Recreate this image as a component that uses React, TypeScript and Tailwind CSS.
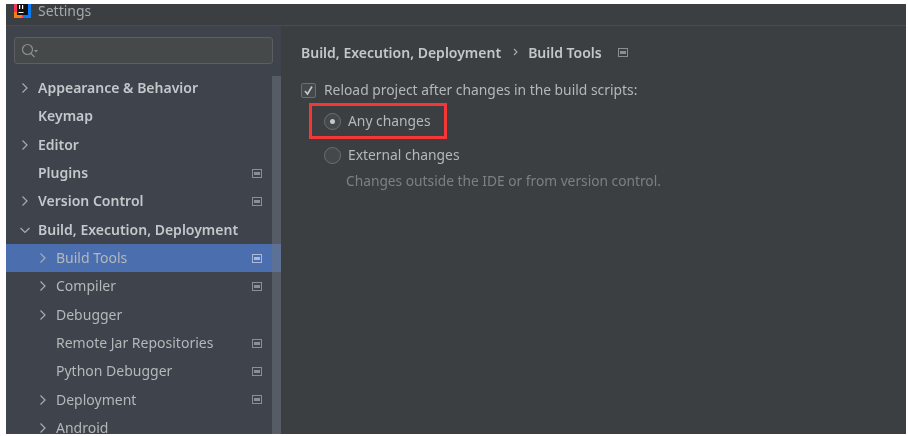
import React from "react";

const Chevron = ({ open = false }: { open?: boolean }) => (
  <svg width="10" height="10" viewBox="0 0 10 10" fill="none" stroke="#a9adb0" strokeWidth="1.2" className="shrink-0">
    {open ? <path d="M0.5 3l4.5 4.5L9.5 3" /> : <path d="M2.5 0.5L7 5l-4.5 4.5" />}
  </svg>
);

const Pin = ({ color = "#8b8f92" }: { color?: string }) => (
  <svg width="10" height="9" viewBox="0 0 10 9" className="shrink-0">
    <rect x="0.5" y="0.5" width="9" height="8" fill="none" stroke={color} />
    <rect x="2" y="3" width="6" height="3" fill={color} />
  </svg>
);

type Row = { label: string; level: 0 | 1; arrow?: "open" | "closed"; pin?: boolean; bold?: boolean; selected?: boolean };

const rows: Row[] = [
  { label: "Appearance & Behavior", level: 0, arrow: "closed", bold: true },
  { label: "Keymap", level: 0, bold: true },
  { label: "Editor", level: 0, arrow: "closed", bold: true },
  { label: "Plugins", level: 0, bold: true, pin: true },
  { label: "Version Control", level: 0, arrow: "closed", bold: true, pin: true },
  { label: "Build, Execution, Deployment", level: 0, arrow: "open", bold: true },
  { label: "Build Tools", level: 1, arrow: "closed", pin: true, selected: true },
  { label: "Compiler", level: 1, arrow: "closed", pin: true },
  { label: "Debugger", level: 1, arrow: "closed" },
  { label: "Remote Jar Repositories", level: 1, pin: true },
  { label: "Python Debugger", level: 1, pin: true },
  { label: "Deployment", level: 1, arrow: "closed", pin: true },
  { label: "Android", level: 1, arrow: "closed" },
];

function TreeRow({ r }: { r: Row }) {
  return (
    <div className={`h-[28.33px] shrink-0 flex items-center pr-[19px] ${r.selected ? "bg-[#4b6eaf]" : ""} ${r.level === 0 ? "pl-[14px]" : "pl-[32px]"}`}>
      <span className="w-[18px] flex items-center shrink-0">
        {r.arrow && <Chevron open={r.arrow === "open"} />}
      </span>
      <span className={`flex-1 text-[14px] leading-none whitespace-nowrap ${r.bold ? "font-semibold text-[#c4c8cb]" : "text-[#b4b8ba]"}`}>{r.label}</span>
      {r.pin && <Pin color={r.selected ? "#a9b9d6" : "#8b8f92"} />}
    </div>
  );
}

export default function App() {
  return (
    <div className="w-[908px] h-[436px] bg-white pt-[4px] pl-[6px] pr-[2px] pb-[2px] overflow-hidden font-['Noto_Sans',sans-serif] blur-[0.4px]">
      <div className="h-full flex flex-col bg-[#3c3f41]">
        <div className="h-[22px] shrink-0 flex items-start border-b border-[#4a4d4f] pl-[8px] gap-[7px] overflow-hidden">
          <svg width="17" height="17" viewBox="0 0 17 17" className="shrink-0 -mt-[3px]">
            <rect x="0" y="0" width="17" height="17" fill="#fe315d" />
            <rect x="9" y="0" width="8" height="17" fill="#087cfa" />
            <rect x="0" y="11" width="8" height="6" fill="#f97a12" />
            <rect x="3" y="2" width="11" height="12" fill="#111" />
            <rect x="4.5" y="11" width="5" height="1" fill="#fff" />
            <rect x="5" y="4" width="1.2" height="4" fill="#fff" />
            <rect x="8" y="4" width="1.2" height="4" fill="#fff" />
          </svg>
          <span className="text-[14px] leading-none text-[#a5a9ab]">Settings</span>
        </div>
        <div className="flex-1 flex min-h-0">
          <div className="w-[275px] shrink-0 bg-[#3e434c] flex flex-col relative overflow-hidden">
            <div className="mt-[11px] ml-[8px] mr-[8px] h-[27px] shrink-0 bg-[#45494a] border border-[#5b5f60] rounded-[3px] flex items-center pl-[6px]">
              <svg width="18" height="16" viewBox="0 0 18 16" fill="none" stroke="#8c9092" strokeWidth="1.2">
                <circle cx="6.5" cy="6.5" r="5" />
                <path d="M10 10.5l3.5 3.5" />
                <path d="M13 7h4l-2 2.5z" fill="#8c9092" stroke="none" />
              </svg>
            </div>
            <div className="mt-[10px] flex flex-col">
              {rows.map((r) => (
                <TreeRow key={r.label} r={r} />
              ))}
            </div>
            <div className="absolute right-0 top-[50px] bottom-0 w-[9px] bg-[#70747d]/50" />
          </div>
          <div className="flex-1 pl-[20px] pt-[14px] text-[13.85px] text-[#b4b8ba]">
            <div className="flex items-center h-[24px] text-[#c4c8cb] font-semibold text-[14px]">
              <span>Build, Execution, Deployment</span>
              <svg width="8" height="10" viewBox="0 0 8 10" fill="none" stroke="#a9adb0" strokeWidth="1.1" className="ml-[11px] mr-[8px]">
                <path d="M2 2l3 3-3 3" />
              </svg>
              <span>Build Tools</span>
              <span className="ml-[16px] flex"><Pin /></span>
            </div>
            <div className="flex items-center h-[24px] mt-[14px]">
              <span className="w-[15px] h-[15px] rounded-[2px] border border-[#6b6f71] bg-[#43494a] flex items-center justify-center mr-[8px] shrink-0">
                <svg width="11" height="11" viewBox="0 0 11 11" fill="none" stroke="#c4c8cb" strokeWidth="1.6"><path d="M2 6l2.5 3L9 1.5" /></svg>
              </span>
              <span>Reload project after changes in the build scripts:</span>
            </div>
            <div className="ml-[8px] mt-[1px] w-[138px] h-[36px] border-[3.5px] border-[#f63737] flex items-center pl-[12px] gap-[7px]">
              <span className="w-[17px] h-[17px] rounded-full border border-[#6b6f71] bg-[#43494a] flex items-center justify-center shrink-0">
                <span className="w-[5px] h-[5px] rounded-full bg-[#c4c8cb]" />
              </span>
              <span>Any changes</span>
            </div>
            <div className="ml-[8px] h-[32px] flex items-center pl-[15px] gap-[7px]">
              <span className="w-[17px] h-[17px] rounded-full border border-[#6b6f71] bg-[#43494a] shrink-0" />
              <span>External changes</span>
            </div>
            <div className="ml-[45px] text-[13.75px] text-[#7d8082] h-[20px] flex items-center">Changes outside the IDE or from version control.</div>
          </div>
        </div>
      </div>
    </div>
  );
}
